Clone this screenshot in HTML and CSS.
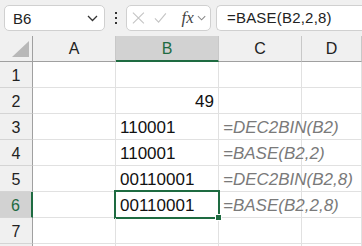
FILE: index.html
```html
<html>
<head>
    <title>Sheet</title>
    <link rel="stylesheet" href="styles.css">
</head>
<body>
    <div class="toolbar">
        <div class="namebox">
            <span>B6</span>
            <svg width="11" height="7" viewBox="0 0 11 7"><path d="M1 1 L5.5 5.5 L10 1" fill="none" stroke="#333" stroke-width="1.3"/></svg>
        </div>
        <div class="dots"><i></i><i></i><i></i></div>
        <div class="funcbox">
            <svg width="14" height="14" viewBox="0 0 14 14"><path d="M1 1 L13 13 M13 1 L1 13" stroke="#c4c4c4" stroke-width="1.2"/></svg>
            <svg width="14" height="12" viewBox="0 0 14 12"><path d="M1 6.5 L5 10.5 L13 1" fill="none" stroke="#c4c4c4" stroke-width="1.2"/></svg>
            <span class="fx">fx</span>
            <svg width="10" height="6" viewBox="0 0 10 6"><path d="M1 1 L5 5 L9 1" fill="none" stroke="#888" stroke-width="1.1"/></svg>
        </div>
        <div class="formula">=BASE(B2,2,8)</div>
    </div>

    <div class="grid">
        <div class="hd corner"><span class="tri"></span></div>
        <div class="hd">A</div>
        <div class="hd sel-col">B</div>
        <div class="hd">C</div>
        <div class="hd">D</div>

        <div class="rh">1</div><div class="c"></div><div class="c"></div><div class="c"></div><div class="c"></div>
        <div class="rh">2</div><div class="c"></div><div class="c num">49</div><div class="c"></div><div class="c"></div>
        <div class="rh">3</div><div class="c"></div><div class="c">110001</div><div class="c f">=DEC2BIN(B2)</div><div class="c"></div>
        <div class="rh">4</div><div class="c"></div><div class="c">110001</div><div class="c f">=BASE(B2,2)</div><div class="c"></div>
        <div class="rh">5</div><div class="c"></div><div class="c">00110001</div><div class="c f">=DEC2BIN(B2,8)</div><div class="c"></div>
        <div class="rh sel-row">6</div><div class="c"></div><div class="c active">00110001</div><div class="c f">=BASE(B2,2,8)</div><div class="c"></div>
        <div class="rh">7</div><div class="c"></div><div class="c"></div><div class="c"></div><div class="c"></div>
        <!-- row 8 only peeks in at the bottom edge -->
        <div class="rh"></div><div class="c"></div><div class="c"></div><div class="c"></div><div class="c"></div>
    </div>
</body>
</html>
```

FILE: styles.css
```css
body {
    margin: 0;
    background-color: #ffffff;
    font-family: "Liberation Sans", Arial, sans-serif;
    overflow: hidden;
}
.toolbar {
    display: flex;
    align-items: center;
    height: 36px;
    padding: 0 0 0 4px;
    box-sizing: border-box;
    background-color: #f0f0f0;
}
.namebox {
    display: flex;
    align-items: center;
    justify-content: space-between;
    width: 101px;
    height: 26px;
    box-sizing: border-box;
    padding: 0 6px 0 8px;
    background-color: #ffffff;
    border: 1px solid #d0d0d0;
    border-radius: 5px;
    font-size: 15px;
    color: #222;
}
.dots {
    display: flex;
    flex-direction: column;
    gap: 3px;
    margin: 0 9px 0 10px;
}
.dots i {
    display: block;
    width: 2px;
    height: 2px;
    background-color: #333;
}
.funcbox {
    display: flex;
    align-items: center;
    width: 85px;
    height: 26px;
    box-sizing: border-box;
    padding: 0 4px 0 5px;
    background-color: #ffffff;
    border: 1px solid #d0d0d0;
    border-radius: 5px;
}
.funcbox svg:nth-child(2) {
    margin-left: 9px;
}
.fx {
    font-family: "Liberation Serif", serif;
    font-style: italic;
    font-size: 17px;
    color: #444;
    margin-left: 15px;
    margin-right: 3px;
}
.formula {
    flex: 1;
    height: 26px;
    box-sizing: border-box;
    margin-left: 5px;
    padding: 3px 0 0 10px;
    background-color: #ffffff;
    border: 1px solid #d0d0d0;
    border-right: none;
    border-radius: 5px 0 0 5px;
    font-size: 15px;
    letter-spacing: 0.2px;
    color: #222;
}
.grid {
    display: grid;
    grid-template-columns: 33px 83px 103px 83px 1fr;
    grid-auto-rows: 26px;
}
.grid > div {
    box-sizing: border-box;
}
.hd {
    background-color: #f0f0f0;
    border-right: 1px solid #c8c8c8;
    border-bottom: 1px solid #a0a0a0;
    text-align: center;
    font-size: 16px;
    line-height: 26px;
    color: #222;
}
.corner {
    position: relative;
    border-right-color: #a0a0a0;
}
.tri {
    position: absolute;
    left: 12px;
    top: 5px;
    width: 17px;
    height: 16px;
    background-color: #b8b8b8;
    clip-path: polygon(100% 0, 100% 100%, 0 100%);
}
.sel-col {
    background-color: #d2d2d2;
    color: #1e6b41;
    border-bottom: 2px solid #1e6b41;
}
.rh {
    background-color: #f0f0f0;
    border-right: 1px solid #a0a0a0;
    border-bottom: 1px solid #d4d4d4;
    text-align: center;
    font-size: 16px;
    line-height: 27px;
    color: #222;
}
.sel-row {
    background-color: #d2d2d2;
    color: #1e6b41;
    border-right: 2px solid #1e6b41;
}
.c {
    position: relative;
    border-right: 1px solid #e1e1e1;
    border-bottom: 1px solid #e1e1e1;
    padding: 0 4px;
    font-size: 17px;
    line-height: 28px;
    white-space: nowrap;
    color: #111;
}
.num {
    text-align: right;
}
.f {
    font-style: italic;
    color: #7a7a7a;
}
.active::after {
    content: "";
    position: absolute;
    left: -2px;
    top: -2px;
    right: -2px;
    bottom: -2px;
    border: 2px solid #1e6b41;
}
.active::before {
    content: "";
    position: absolute;
    right: -4px;
    bottom: -4px;
    width: 5px;
    height: 5px;
    background-color: #1e6b41;
    border: 1px solid #ffffff;
    z-index: 1;
}
```
